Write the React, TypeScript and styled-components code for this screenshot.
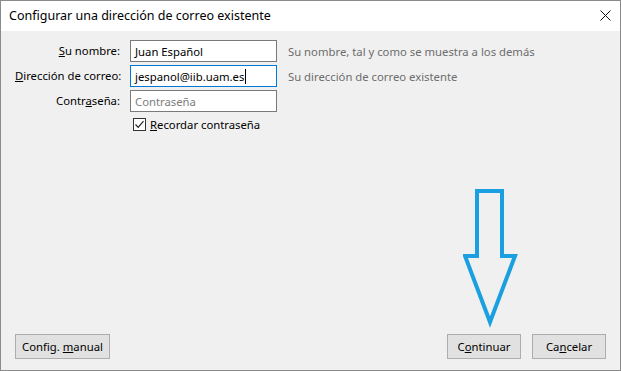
import styled, { createGlobalStyle } from "styled-components";

const GlobalStyle = createGlobalStyle`
  html, body {
    margin: 0;
    padding: 0;
    background: #ffffff;
  }
  body {
    font-family: "Noto Sans", "Open Sans", sans-serif;
    font-size: 11.3px;
    color: #000;
  }
`;

const DownArrow = () => (
  <ArrowSvg width="60" height="140" viewBox="0 0 60 140">
    <path
      d="M14 2 H39 V67 H52 L27 133 L2 67 H14 Z"
      fill="none"
      stroke="#1aa0e0"
      strokeWidth="4"
      strokeLinejoin="miter"
    />
  </ArrowSvg>
);

const CheckMark = () => (
  <svg width="11" height="11" viewBox="0 0 11 11">
    <path d="M1.5 5.5 L4.2 8.3 L9.5 2.2" fill="none" stroke="#222" strokeWidth="1.2" />
  </svg>
);

const CloseIcon = () => (
  <svg width="11" height="11" viewBox="0 0 11 11">
    <path d="M0.5 0.5 L10.5 10.5 M10.5 0.5 L0.5 10.5" stroke="#111" strokeWidth="1" />
  </svg>
);

const App = () => {
  return (
    <>
      <GlobalStyle />
      <Window>
        <TitleBar>
          <Title>Configurar una dirección de correo existente</Title>
          <CloseButton>
            <CloseIcon />
          </CloseButton>
        </TitleBar>
        <Body>
          <Form>
            <Label>
              <u>S</u>u nombre:
            </Label>
            <Field>Juan Español</Field>
            <Hint>Su nombre, tal y como se muestra a los demás</Hint>

            <Label>
              <u>D</u>irección de correo:
            </Label>
            <Field focused>
              <span>jespanol@iib.uam.es</span>
              <Caret />
            </Field>
            <Hint>Su dirección de correo existente</Hint>

            <Label>
              Contr<u>a</u>seña:
            </Label>
            <Field placeholder>Contraseña</Field>
            <span />

            <span />
            <CheckRow>
              <CheckBox>
                <CheckMark />
              </CheckBox>
              <span>
                <u>R</u>ecordar contraseña
              </span>
            </CheckRow>
            <span />
          </Form>
          <Spacer />
          <ButtonBar>
            <Button>
              <span>
                Config. <u>m</u>anual
              </span>
            </Button>
            <RightButtons>
              <Button wide>
                <span>
                  C<u>o</u>ntinuar
                </span>
              </Button>
              <Button wide>
                <span>
                  Ca<u>n</u>celar
                </span>
              </Button>
            </RightButtons>
          </ButtonBar>
          <DownArrow />
        </Body>
      </Window>
    </>
  );
};

const Window = styled.div`
  box-sizing: border-box;
  width: 621px;
  height: 371px;
  border: 1px solid #8a8a8a;
  display: flex;
  flex-direction: column;
  background: #f0f0f0;
  overflow: hidden;
`;

const TitleBar = styled.div`
  height: 30px;
  background: #ffffff;
  display: flex;
  align-items: center;
  justify-content: space-between;
  padding: 0 9px 0 8px;
`;

const Title = styled.span`
  font-size: 12.5px;
  color: #000;
  padding-bottom: 1px;
`;

const CloseButton = styled.span`
  display: flex;
  align-items: center;
  padding-bottom: 1px;
`;

const Body = styled.div`
  position: relative;
  flex: 1;
  display: flex;
  flex-direction: column;
  padding: 9px 14px 11px 14px;
`;

const Form = styled.div`
  display: grid;
  grid-template-columns: 105px 147px auto;
  column-gap: 10px;
  row-gap: 3px;
  align-items: center;
`;

const Label = styled.span`
  text-align: right;
  white-space: nowrap;
  line-height: 22px;
`;

const Field = styled.div<{ focused?: boolean; placeholder?: boolean }>`
  box-sizing: border-box;
  height: 22px;
  display: flex;
  align-items: center;
  padding: 0 4px;
  background: #fff;
  border: 1px solid ${(p) => (p.focused ? "#0078d7" : "#7a7a7a")};
  color: ${(p) => (p.placeholder ? "#7d7d7d" : "#000")};
  white-space: nowrap;
`;

const Caret = styled.span`
  display: inline-block;
  width: 1px;
  height: 15px;
  background: #000;
  margin-left: 1px;
`;

const Hint = styled.span`
  color: #6d6d6d;
  padding-left: 1px;
  white-space: nowrap;
`;

const CheckRow = styled.div`
  display: flex;
  align-items: center;
  gap: 4px;
  padding-left: 3px;
  height: 18px;
`;

const CheckBox = styled.span`
  box-sizing: border-box;
  width: 13px;
  height: 13px;
  border: 1px solid #333;
  background: #fff;
  display: flex;
  align-items: center;
  justify-content: center;
`;

const Spacer = styled.div`
  flex: 1;
`;

const ButtonBar = styled.div`
  display: flex;
  justify-content: space-between;
  align-items: center;
`;

const RightButtons = styled.div`
  display: flex;
  gap: 11px;
`;

const Button = styled.div<{ wide?: boolean }>`
  box-sizing: border-box;
  height: 25px;
  width: ${(p) => (p.wide ? "74px" : "95px")};
  display: flex;
  align-items: center;
  justify-content: center;
  background: #e1e1e1;
  border: 1px solid #adadad;
  color: #000;
  white-space: nowrap;
`;

const ArrowSvg = styled.svg`
  position: absolute;
  left: 462px;
  top: 158px;
`;

export default App;
